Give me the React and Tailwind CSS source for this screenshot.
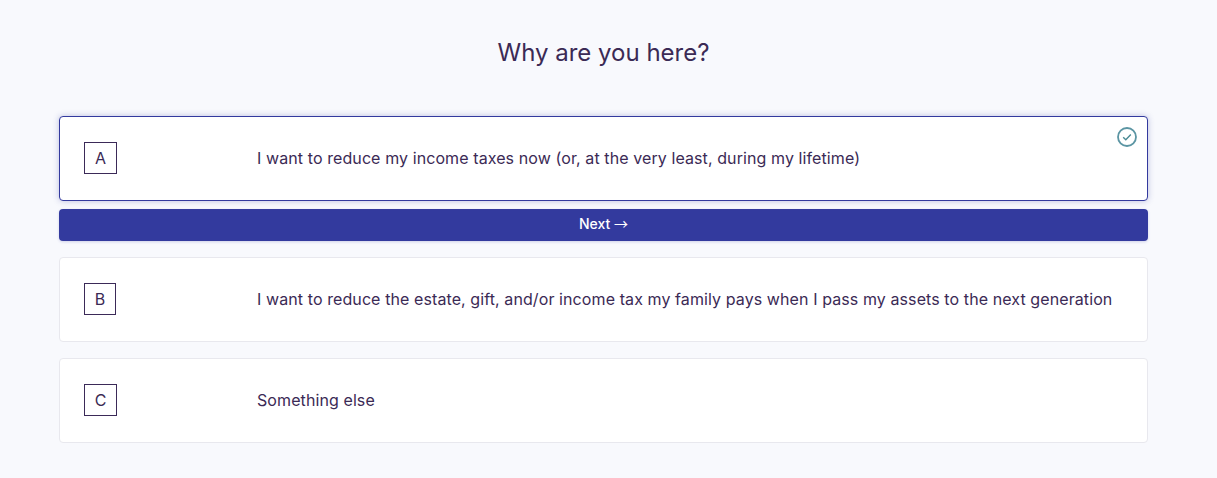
import React from 'react';

const options = [
  { letter: 'A', box: 'w-[33px]', text: 'I want to reduce my income taxes now (or, at the very least, during my lifetime)', selected: true },
  { letter: 'B', box: 'w-[32px]', text: 'I want to reduce the estate, gift, and/or income tax my family pays when I pass my assets to the next generation' },
  { letter: 'C', box: 'w-[33px]', text: 'Something else' },
];

function Option({ option }) {
  return (
    <div
      className={
        option.selected
          ? 'relative flex h-[85px] items-center rounded border border-[#333a9e] bg-white pl-[24px] shadow-[0_0_6px_rgba(51,58,158,0.3)]'
          : 'relative flex h-[85px] items-center rounded border border-[#e8e8ee] bg-white pl-[24px]'
      }
    >
      <div className="w-[173px] pb-[1px]">
        <div className={`flex h-[32px] items-center justify-center border border-[#3b2a58] text-base text-[#3b2a55] ${option.box}`}>
          {option.letter}
        </div>
      </div>
      <div className="pb-[1px] text-base leading-[22px] tracking-[0.093px] text-[#3b2a55]">{option.text}</div>
      {option.selected && (
        <svg className="absolute right-[10px] top-[10px]" width="20" height="20" viewBox="0 0 20 20" fill="none" stroke="#5b95a3" strokeWidth="1.8">
          <circle cx="10" cy="10" r="9" />
          <path d="M6.2 10.2l2.6 2.6L13.8 7.4" strokeWidth="1.4" stroke="#4a8a94" />
        </svg>
      )}
    </div>
  );
}

export default function App() {
  return (
    <div className="min-h-[478px] bg-[#f8f9fd] pr-[69px] pl-[59px] pt-[37px] font-['Inter',sans-serif]">
      <h1 className="mb-[47px] text-center text-2xl leading-[32px] font-normal text-[#3b2a55]">Why are you here?</h1>
      <div className="flex flex-col">
        <Option option={options[0]} />
        <button className="mt-[8px] mb-[16px] h-[32px] rounded bg-[#333a9e] pb-[3px] text-sm leading-[20px] font-medium text-white shadow-[0_1px_3px_rgba(51,58,158,0.2)]">
          Next <span className="font-['Noto_Sans_CJK_SC',sans-serif] leading-none font-normal">→</span>
        </button>
        <Option option={options[1]} />
        <div className="mt-[16px]">
          <Option option={options[2]} />
        </div>
      </div>
    </div>
  );
}
